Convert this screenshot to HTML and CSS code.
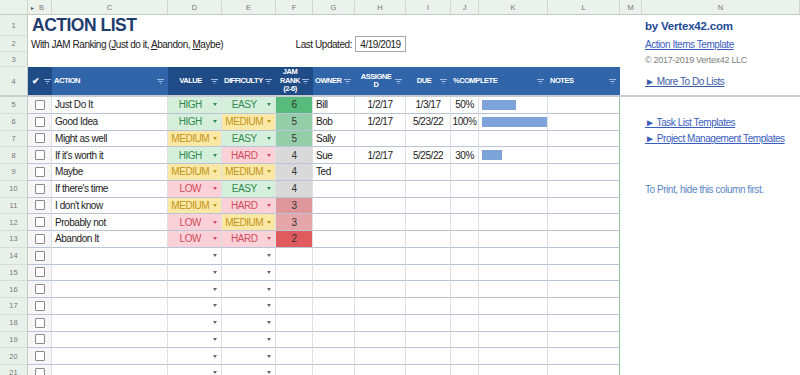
FILE: index.html
```html
<!DOCTYPE html>
<html lang="en">
<head>
    <meta charset="UTF-8">
    <meta name="viewport" content="width=device-width, initial-scale=1.0">
    <title>Action List</title>
    <link rel="stylesheet" href="styles.css">
</head>
<body>
    <div class="sheet">
        <!-- Column letters -->
        <div class="row cols">
            <div></div>
            <div class="colb"><span class="hid">&#9656;</span>B</div>
            <div>C</div><div>D</div><div>E</div><div>F</div><div>G</div><div>H</div>
            <div>I</div><div>J</div><div>K</div><div>L</div><div>M</div><div>N</div>
        </div>

        <!-- Title rows -->
        <div class="row r1">
            <div class="rn">1</div>
            <div class="title">ACTION LIST</div>
            <div class="n brand">by Vertex42.com</div>
        </div>
        <div class="row r2">
            <div class="rn">2</div>
            <div class="subtitle"><span>With JAM Ranking (<u>J</u>ust do it, <u>A</u>bandon, <u>M</u>aybe)</span></div>
            <div class="updated">Last Updated:</div>
            <div class="datebox">4/19/2019</div>
            <div class="gap4"></div>
            <div class="n"><a class="link" href="#">Action Items Template</a></div>
        </div>
        <div class="row r3">
            <div class="rn">3</div>
            <div class="gap12"></div>
            <div class="n copy">&copy; 2017-2019 Vertex42 LLC</div>
        </div>

        <!-- Table header -->
        <div class="row r4">
            <div class="rn">4</div>
            <div class="hd dk"><span class="lbl tick">&#10004;</span><svg class="flt" viewBox="0 0 7 5"><path d="M0 .5h7M1.5 2.5h4M3 4.5h1"/></svg></div>
            <div class="hd"><span class="lbl">ACTION</span><svg class="flt" viewBox="0 0 7 5"><path d="M0 .5h7M1.5 2.5h4M3 4.5h1"/></svg></div>
            <div class="hd dk"><span class="lbl mid">VALUE</span><svg class="flt" viewBox="0 0 7 5"><path d="M0 .5h7M1.5 2.5h4M3 4.5h1"/></svg></div>
            <div class="hd dk"><span class="lbl">DIFFICULTY</span><svg class="flt" viewBox="0 0 7 5"><path d="M0 .5h7M1.5 2.5h4M3 4.5h1"/></svg></div>
            <div class="hd dk"><span class="lbl mid">JAM<br>RANK<br>(2-6)</span><svg class="flt" viewBox="0 0 7 5"><path d="M0 .5h7M1.5 2.5h4M3 4.5h1"/></svg></div>
            <div class="hd"><span class="lbl">OWNER</span><svg class="flt" viewBox="0 0 7 5"><path d="M0 .5h7M1.5 2.5h4M3 4.5h1"/></svg></div>
            <div class="hd"><span class="lbl mid">ASSIGNE<br>D</span><svg class="flt" viewBox="0 0 7 5"><path d="M0 .5h7M1.5 2.5h4M3 4.5h1"/></svg></div>
            <div class="hd"><span class="lbl mid">DUE</span><svg class="flt" viewBox="0 0 7 5"><path d="M0 .5h7M1.5 2.5h4M3 4.5h1"/></svg></div>
            <div class="hd wide"><span class="lbl">%COMPLETE</span><svg class="flt" viewBox="0 0 7 5"><path d="M0 .5h7M1.5 2.5h4M3 4.5h1"/></svg></div>
            <div class="hd"><span class="lbl">NOTES</span><svg class="flt" viewBox="0 0 7 5"><path d="M0 .5h7M1.5 2.5h4M3 4.5h1"/></svg></div>
            <div class="m fz"></div>
            <div class="n fz"><a class="link more" href="#">&#9658; More To Do Lists</a></div>
        </div>

        <!-- Data rows -->
        <div class="row">
            <div class="rn">5</div>
            <div class="c ck"><span class="box"></span></div>
            <div class="c tx">Just Do It</div>
            <div class="c dd hi"><span>HIGH</span><i></i></div>
            <div class="c dd hi"><span>EASY</span><i></i></div>
            <div class="c rk k6">6</div>
            <div class="c tx">Bill</div>
            <div class="c ct">1/2/17</div>
            <div class="c ct">1/3/17</div>
            <div class="c ct">50%</div>
            <div class="c bar"><span style="width: 34px"></span></div>
            <div class="c last"></div>
            <div class="m"></div>
            <div class="n"></div>
        </div>
        <div class="row">
            <div class="rn">6</div>
            <div class="c ck"><span class="box"></span></div>
            <div class="c tx">Good Idea</div>
            <div class="c dd hi"><span>HIGH</span><i></i></div>
            <div class="c dd md"><span>MEDIUM</span><i></i></div>
            <div class="c rk k5">5</div>
            <div class="c tx">Bob</div>
            <div class="c ct">1/2/17</div>
            <div class="c ct">5/23/22</div>
            <div class="c ct">100%</div>
            <div class="c bar"><span style="width: 68px"></span></div>
            <div class="c last"></div>
            <div class="m"></div>
            <div class="n"><a class="link" href="#">&#9658; Task List Templates</a></div>
        </div>
        <div class="row">
            <div class="rn">7</div>
            <div class="c ck"><span class="box"></span></div>
            <div class="c tx">Might as well</div>
            <div class="c dd md"><span>MEDIUM</span><i></i></div>
            <div class="c dd hi"><span>EASY</span><i></i></div>
            <div class="c rk k5">5</div>
            <div class="c tx">Sally</div>
            <div class="c ct"></div>
            <div class="c ct"></div>
            <div class="c ct"></div>
            <div class="c bar"></div>
            <div class="c last"></div>
            <div class="m"></div>
            <div class="n"><a class="link" href="#">&#9658; Project Management Templates</a></div>
        </div>
        <div class="row">
            <div class="rn">8</div>
            <div class="c ck"><span class="box"></span></div>
            <div class="c tx">If it's worth it</div>
            <div class="c dd hi"><span>HIGH</span><i></i></div>
            <div class="c dd lo"><span>HARD</span><i></i></div>
            <div class="c rk k4">4</div>
            <div class="c tx">Sue</div>
            <div class="c ct">1/2/17</div>
            <div class="c ct">5/25/22</div>
            <div class="c ct">30%</div>
            <div class="c bar"><span style="width: 20px"></span></div>
            <div class="c last"></div>
            <div class="m"></div>
            <div class="n"></div>
        </div>
        <div class="row">
            <div class="rn">9</div>
            <div class="c ck"><span class="box"></span></div>
            <div class="c tx">Maybe</div>
            <div class="c dd md"><span>MEDIUM</span><i></i></div>
            <div class="c dd md"><span>MEDIUM</span><i></i></div>
            <div class="c rk k4">4</div>
            <div class="c tx">Ted</div>
            <div class="c ct"></div>
            <div class="c ct"></div>
            <div class="c ct"></div>
            <div class="c bar"></div>
            <div class="c last"></div>
            <div class="m"></div>
            <div class="n"></div>
        </div>
        <div class="row">
            <div class="rn">10</div>
            <div class="c ck"><span class="box"></span></div>
            <div class="c tx">If there's time</div>
            <div class="c dd lo"><span>LOW</span><i></i></div>
            <div class="c dd hi"><span>EASY</span><i></i></div>
            <div class="c rk k4">4</div>
            <div class="c tx"></div>
            <div class="c ct"></div>
            <div class="c ct"></div>
            <div class="c ct"></div>
            <div class="c bar"></div>
            <div class="c last"></div>
            <div class="m"></div>
            <div class="n note">To Print, hide this column first.</div>
        </div>
        <div class="row">
            <div class="rn">11</div>
            <div class="c ck"><span class="box"></span></div>
            <div class="c tx">I don't know</div>
            <div class="c dd md"><span>MEDIUM</span><i></i></div>
            <div class="c dd lo"><span>HARD</span><i></i></div>
            <div class="c rk k3">3</div>
            <div class="c tx"></div>
            <div class="c ct"></div>
            <div class="c ct"></div>
            <div class="c ct"></div>
            <div class="c bar"></div>
            <div class="c last"></div>
            <div class="m"></div>
            <div class="n"></div>
        </div>
        <div class="row">
            <div class="rn">12</div>
            <div class="c ck"><span class="box"></span></div>
            <div class="c tx">Probably not</div>
            <div class="c dd lo"><span>LOW</span><i></i></div>
            <div class="c dd md"><span>MEDIUM</span><i></i></div>
            <div class="c rk k3b">3</div>
            <div class="c tx"></div>
            <div class="c ct"></div>
            <div class="c ct"></div>
            <div class="c ct"></div>
            <div class="c bar"></div>
            <div class="c last"></div>
            <div class="m"></div>
            <div class="n"></div>
        </div>
        <div class="row">
            <div class="rn">13</div>
            <div class="c ck"><span class="box"></span></div>
            <div class="c tx">Abandon It</div>
            <div class="c dd lo"><span>LOW</span><i></i></div>
            <div class="c dd lo"><span>HARD</span><i></i></div>
            <div class="c rk k2">2</div>
            <div class="c tx"></div>
            <div class="c ct"></div>
            <div class="c ct"></div>
            <div class="c ct"></div>
            <div class="c bar"></div>
            <div class="c last"></div>
            <div class="m"></div>
            <div class="n"></div>
        </div>

        <!-- Empty rows -->
        <div class="row">
            <div class="rn">14</div>
            <div class="c ck"><span class="box"></span></div>
            <div class="c"></div><div class="c dd"><span></span><i></i></div><div class="c dd"><span></span><i></i></div>
            <div class="c"></div><div class="c"></div><div class="c"></div><div class="c"></div><div class="c"></div><div class="c"></div>
            <div class="c last"></div><div class="m"></div><div class="n"></div>
        </div>
        <div class="row">
            <div class="rn">15</div>
            <div class="c ck"><span class="box"></span></div>
            <div class="c"></div><div class="c dd"><span></span><i></i></div><div class="c dd"><span></span><i></i></div>
            <div class="c"></div><div class="c"></div><div class="c"></div><div class="c"></div><div class="c"></div><div class="c"></div>
            <div class="c last"></div><div class="m"></div><div class="n"></div>
        </div>
        <div class="row">
            <div class="rn">16</div>
            <div class="c ck"><span class="box"></span></div>
            <div class="c"></div><div class="c dd"><span></span><i></i></div><div class="c dd"><span></span><i></i></div>
            <div class="c"></div><div class="c"></div><div class="c"></div><div class="c"></div><div class="c"></div><div class="c"></div>
            <div class="c last"></div><div class="m"></div><div class="n"></div>
        </div>
        <div class="row">
            <div class="rn">17</div>
            <div class="c ck"><span class="box"></span></div>
            <div class="c"></div><div class="c dd"><span></span><i></i></div><div class="c dd"><span></span><i></i></div>
            <div class="c"></div><div class="c"></div><div class="c"></div><div class="c"></div><div class="c"></div><div class="c"></div>
            <div class="c last"></div><div class="m"></div><div class="n"></div>
        </div>
        <div class="row">
            <div class="rn">18</div>
            <div class="c ck"><span class="box"></span></div>
            <div class="c"></div><div class="c dd"><span></span><i></i></div><div class="c dd"><span></span><i></i></div>
            <div class="c"></div><div class="c"></div><div class="c"></div><div class="c"></div><div class="c"></div><div class="c"></div>
            <div class="c last"></div><div class="m"></div><div class="n"></div>
        </div>
        <div class="row">
            <div class="rn">19</div>
            <div class="c ck"><span class="box"></span></div>
            <div class="c"></div><div class="c dd"><span></span><i></i></div><div class="c dd"><span></span><i></i></div>
            <div class="c"></div><div class="c"></div><div class="c"></div><div class="c"></div><div class="c"></div><div class="c"></div>
            <div class="c last"></div><div class="m"></div><div class="n"></div>
        </div>
        <div class="row">
            <div class="rn">20</div>
            <div class="c ck"><span class="box"></span></div>
            <div class="c"></div><div class="c dd"><span></span><i></i></div><div class="c dd"><span></span><i></i></div>
            <div class="c"></div><div class="c"></div><div class="c"></div><div class="c"></div><div class="c"></div><div class="c"></div>
            <div class="c last"></div><div class="m"></div><div class="n"></div>
        </div>
        <div class="row">
            <div class="rn">21</div>
            <div class="c ck"><span class="box"></span></div>
            <div class="c"></div><div class="c dd"><span></span><i></i></div><div class="c dd"><span></span><i></i></div>
            <div class="c"></div><div class="c"></div><div class="c"></div><div class="c"></div><div class="c"></div><div class="c"></div>
            <div class="c last"></div><div class="m"></div><div class="n"></div>
        </div>
    </div>
</body>
</html>
```

FILE: styles.css
```css
* {
    box-sizing: border-box;
}

body {
    margin: 0;
    height: 375px;
    overflow: hidden;
    background: #fff;
    color: #222;
    font-family: "Liberation Sans", Arial, sans-serif;
    font-size: 10px;
    letter-spacing: -0.45px;
}

.sheet {
    width: 800px;
}

.row {
    display: grid;
    grid-template-columns: 28px 24px 116px 54px 54px 37px 42px 51px 45px 28px 69px 72px 22px 158px;
    height: 16.75px;
}

.row > div {
    display: flex;
    align-items: center;
    min-width: 0;
    white-space: nowrap;
}

/* column letters */
.cols {
    height: 15px;
}

.cols > div {
    justify-content: center;
    background: #eaf2eb;
    border-right: 1px solid #cfd8cf;
    border-bottom: 1px solid #c3ccc3;
    color: #777;
    font-size: 7.5px;
    letter-spacing: 0;
}

.cols .colb {
    justify-content: flex-start;
    padding-left: 3px;
    gap: 5px;
}

.hid {
    font-size: 6px;
    color: #555;
}

/* row numbers */
.rn {
    justify-content: center;
    background: #e8f1e9;
    border-right: 1px solid #c3ccc3;
    border-bottom: 1px solid #d5ddd5;
    color: #777;
    font-size: 7.5px;
    letter-spacing: 0;
}

/* title area */
.r1 { height: 21px; }
.r2 { height: 16px; }
.r3 { height: 15px; }

.title {
    grid-column: 2 / 14;
    padding-left: 4px;
    color: #1f3c6d;
    font-size: 17.5px;
    font-weight: bold;
    letter-spacing: -0.5px;
}

.subtitle {
    grid-column: 2 / 6;
    padding-left: 3px;
    color: #222;
}

.updated {
    grid-column: 6 / 8;
    justify-content: flex-end;
    padding-right: 3px;
}

.row > .datebox {
    justify-content: center;
    border: 1px solid #a8a8a8;
}

.gap4 {
    grid-column: 9 / 14;
}

.gap12 {
    grid-column: 2 / 14;
}

.n {
    padding-left: 3px;
}

.brand {
    grid-column: 14;
    color: #1d4a93;
    font-size: 11.5px;
    font-weight: bold;
    letter-spacing: -0.2px;
}

.link {
    color: #3a5cbf;
    text-decoration: underline;
}

.more {
    color: #3a5aa8;
}

.copy {
    color: #808080;
    font-size: 9px;
    letter-spacing: -0.3px;
}

.note {
    color: #5b86c6;
}

/* table header */
.r4 {
    height: 30px;
}

.r4 > div {
    border-bottom: 2px solid #c8cbd0;
}

.hd {
    background: #3165a9;
    color: #fff;
    font-size: 7.5px;
    font-weight: bold;
    letter-spacing: -0.45px;
    line-height: 8.5px;
}

.hd.dk {
    background: #1f4b86;
}

.hd.wide {
    grid-column: span 2;
}

.lbl {
    flex: 1;
    padding-left: 2px;
}

.lbl.mid {
    text-align: center;
}

.tick {
    flex: none;
    padding-left: 4px;
    margin-right: 4px;
    font-size: 9px;
}

.flt {
    width: 7px;
    height: 5px;
    margin-right: 4px;
    flex: none;
    stroke: #a4bde3;
    stroke-width: 1;
    fill: none;
}

.r4 > .fz {
    background: #fff;
}

/* data cells */
.c {
    border-right: 1px solid #dcdfe4;
    border-bottom: 1px solid #b9c4d6;
}

.c.last {
    border-right-color: #93bf9b;
}

.ck {
    justify-content: center;
    background: #f6f6f6;
}

.box {
    width: 10px;
    height: 10px;
    border: 1px solid #8a8a8a;
    border-radius: 1px;
    background: #fff;
}

.tx {
    padding-left: 3px;
}

.ct {
    justify-content: center;
}

.dd {
    color: #666;
}

.dd span {
    flex: 1;
    text-align: center;
}

.dd i {
    width: 0;
    height: 0;
    margin-right: 4.5px;
    border-left: 2.5px solid transparent;
    border-right: 2.5px solid transparent;
    border-top: 3px solid currentColor;
}

.dd.hi {
    background: #d6efdc;
    color: #2e8c4e;
}

.dd.md {
    background: #fce8a5;
    color: #bf9418;
}

.dd.lo {
    background: #fad1d7;
    color: #d24d5d;
}

.rk {
    justify-content: center;
    color: #333;
}

.k6 { background: #57bb7b; }
.k5 { background: #93cea8; }
.k4 { background: #d9d9d9; }
.k3 { background: #e0979c; }
.k3b { background: #e4a6a9; }
.k2 { background: #e05b5d; }

.bar span {
    display: block;
    height: 10px;
    margin-left: 3px;
    background: #7ea3d8;
}
```
